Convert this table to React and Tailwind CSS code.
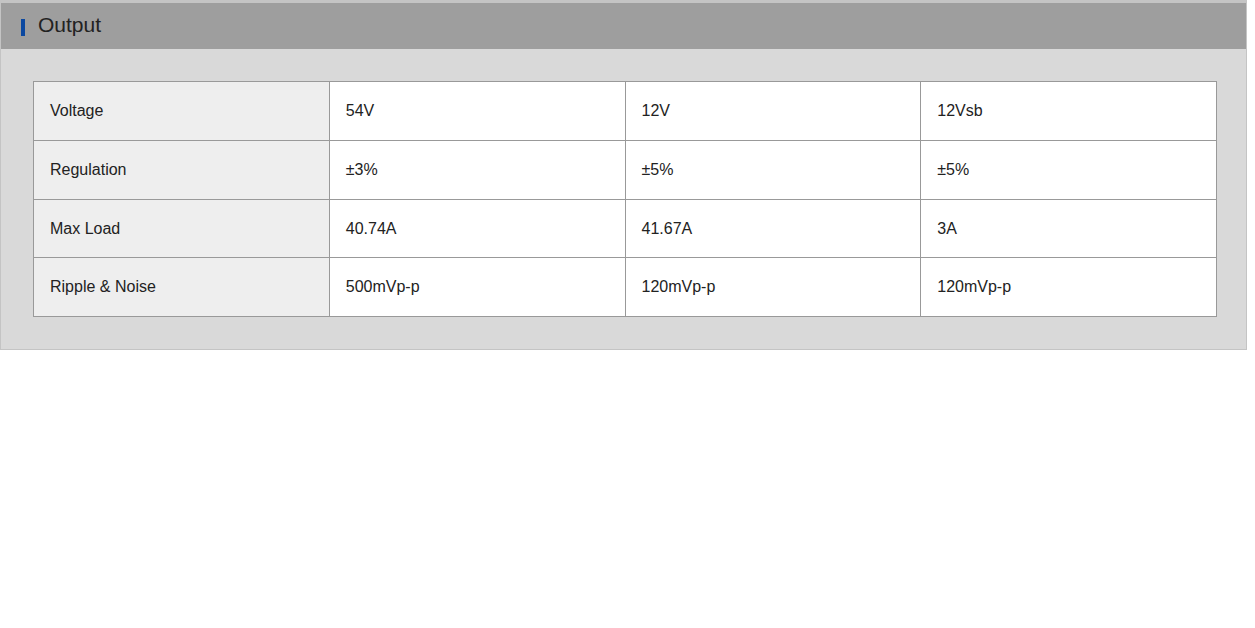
import React from 'react';

const rows = [
  { label: 'Voltage', values: ['54V', '12V', '12Vsb'], h: 'h-[59px]' },
  { label: 'Regulation', values: ['±3%', '±5%', '±5%'], h: 'h-[59px]' },
  { label: 'Max Load', values: ['40.74A', '41.67A', '3A'], h: 'h-[58px]' },
  { label: 'Ripple & Noise', values: ['500mVp-p', '120mVp-p', '120mVp-p'], h: 'h-[59px]' },
];

export default function App() {
  return (
    <div className="min-h-screen bg-white" style={{ fontFamily: '"Liberation Sans", Arial, sans-serif' }}>
      <div className="w-[1247px] border-t-[3px] border-x border-b border-[#c4c4c4]">
        {/* Header */}
        <div className="h-[46px] bg-[#9e9e9e] flex items-center pl-[20px]">
          <span className="w-[4px] h-[17px] bg-[#0b48a0] mt-[3px]" />
          <h2 className="ml-[13px] mb-[3px] text-[21px] text-[#222] leading-none">Output</h2>
        </div>

        {/* Body */}
        <div className="bg-[#d9d9d9] pl-[32px] pr-[29px] pt-[32px] pb-[32px]">
          <table className="w-[1184px] table-fixed border-collapse text-[16px] text-[#222]">
            <tbody>
              {rows.map((row) => (
                <tr key={row.label} className={row.h}>
                  <td className="border border-[#999] bg-[#eeeeee] pl-[16px] align-middle">{row.label}</td>
                  {row.values.map((v, i) => (
                    <td key={i} className="border border-[#999] bg-white pl-[16px] align-middle">{v}</td>
                  ))}
                </tr>
              ))}
            </tbody>
          </table>
        </div>
      </div>
    </div>
  );
}
